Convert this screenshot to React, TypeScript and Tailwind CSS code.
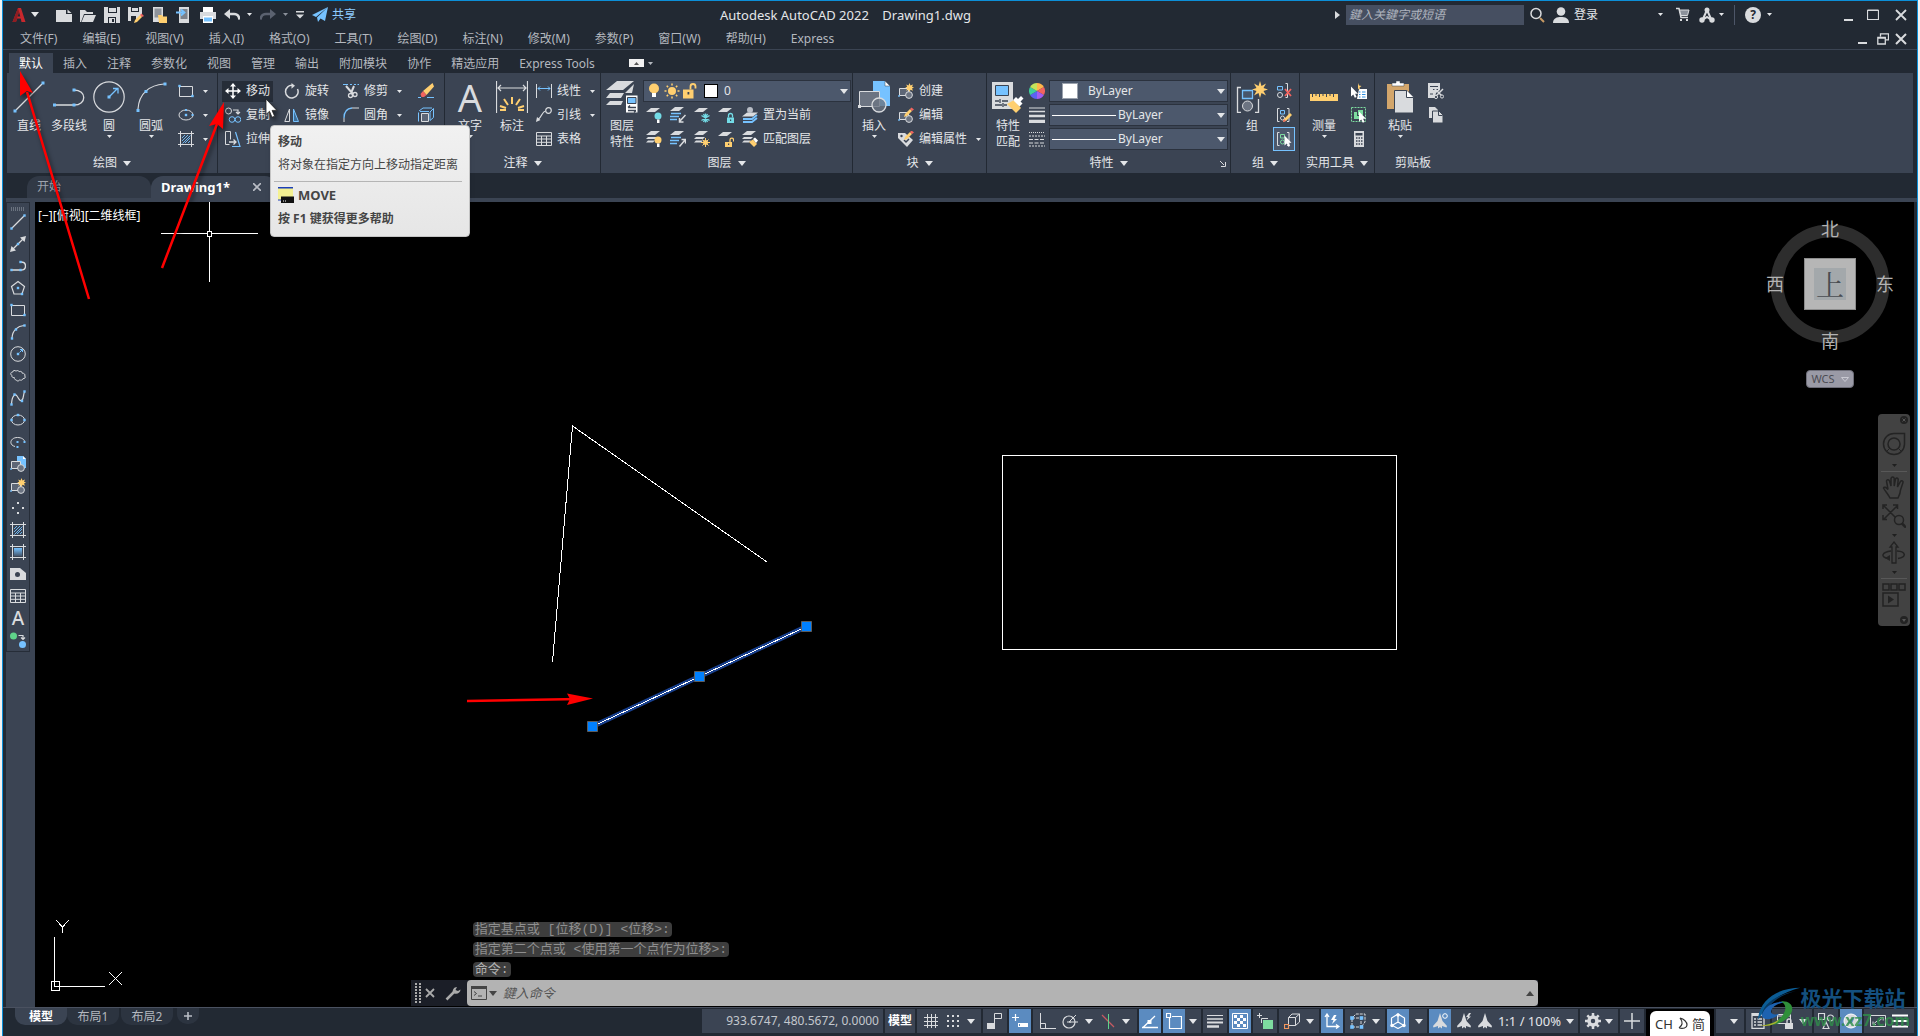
import React from "react";
import type { ReactNode } from "react";

const L = "#d9dbde";
const B = "#76c2ff";
const Y = "#ffcf70";
const T = "#73dbe6";
const G = "#7ddb9f";
const R = "#f2645f";
const D = "#3b4453";

type IcoProps = { s?: number; h?: number; vb?: string; children: ReactNode };

function Ico({ s = 16, h, vb, children }: IcoProps) {
  return (
    <svg width={s} height={h ?? s} viewBox={vb ?? `0 0 ${s} ${h ?? s}`} fill="none" className="shrink-0" aria-hidden="true">
      {children}
    </svg>
  );
}

const Dot = ({ x, y, r = 1.2 }: { x: number; y: number; r?: number }) => (
  <rect x={x - r} y={y - r} width={r * 2} height={r * 2} fill={B} />
);

function Caret({ big = false, up = false }: { big?: boolean; up?: boolean }) {
  return (
    <svg width={big ? 8 : 5} height={big ? 5 : 3} viewBox="0 0 8 5" preserveAspectRatio="none" className="shrink-0" aria-hidden="true">
      <path d={up ? "M0 5L4 0L8 5z" : "M0 0H8L4 5z"} fill="currentColor" />
    </svg>
  );
}

/* ---------- small icons ---------- */
const LineI = () => (<Ico><path d="M2 14L14 2" stroke={L} strokeWidth="1.3" /><Dot x={1.5} y={14.5} /><Dot x={14.5} y={1.5} /></Ico>);
const XLineI = () => (<Ico><path d="M2 14L14 2" stroke={L} strokeWidth="1.2" /><path d="M0 16l1.500-6 4.500 4.500zM16 0l-6 1.500 4.500 4.500z" fill={L} /><Dot x={8} y={8} /></Ico>);
const PlineI = () => (<Ico><path d="M1 12h9M11 4c6 0 6 8 0 8" stroke={L} strokeWidth="1.300" /><Dot x={1.5} y={12} /><Dot x={10.5} y={4} /><Dot x={10.5} y={12} /></Ico>);
const PolygonI = () => (<Ico><path d="M8 1.500L14.500 6.500 12 14H4L1.500 6.500z" stroke={L} strokeWidth="1.200" /><Dot x={8} y={8} /><Dot x={12} y={14} /></Ico>);
const RectI = () => (<Ico><path d="M1.500 3.500h13v10h-13z" stroke={L} /><Dot x={1.5} y={3} /><Dot x={14.5} y={13} /></Ico>);
const ArcI = () => (<Ico><path d="M2 14C2.500 6 8 2 14 1.500" stroke={L} strokeWidth="1.200" /><Dot x={2} y={14.5} /><Dot x={6} y={5.5} /><Dot x={14.5} y={1.5} /></Ico>);
const CircleI = () => (<Ico><circle cx="8" cy="8" r="7.300" stroke={L} /><path d="M9.500 6.500L12 4M10 3.500h2.500V6" stroke={B} /><Dot x={8} y={8} /></Ico>);
const CloudI = () => (<Ico><path d="M2 7.500C0 6.500.5 4 2.500 4.200 3 2.200 5 2 6 3.200c1-1 2.700-.8 3.200.5 1.500-.8 3 0 2.900 1.400 2 0 3.400 1.300 2.700 2.900 1.200 1.400-.2 3-1.800 2.600-.5 1.700-2.200 2-3.200 1.200-1 1.700-3.200 1.500-3.600 0-1.400 0-2.200-1-1.800-2.200C2.500 9.700 1.400 8.800 2 7.500z" stroke={L} /></Ico>);
const SplineI = () => (<Ico><path d="M1.500 14C2 6 5 3 7 6s3 6 5 4 1-5 2.500-8" stroke={L} strokeWidth="1.200" /><Dot x={1.5} y={14.5} /><Dot x={4.5} y={4.5} /><Dot x={12} y={11} /><Dot x={14.5} y={1.5} /></Ico>);
const EllipseI = () => (<Ico><ellipse cx="8" cy="8" rx="6.500" ry="5" stroke={L} /><Dot x={1.5} y={8} /><Dot x={14.5} y={8} /><Dot x={8} y={3} /></Ico>);
const EllipseCI = () => (<Ico><ellipse cx="8" cy="8" rx="7" ry="5" stroke={L} /><Dot x={8} y={8} /><Dot x={8} y={3} r={1} /><Dot x={14.5} y={8} r={1} /></Ico>);
const EArcI = () => (<Ico><path d="M5 12.500C-1.500 11 0 3.500 7.500 3.500c4 0 7 2 7 4" stroke={L} /><Dot x={7.5} y={8} r={1} /><Dot x={14.5} y={8} r={1} /><Dot x={7.5} y={13} r={1} /></Ico>);
const BlockBase = ({ light = "#5d6676" }: { light?: string }) => (
  <><path d="M1.500 5.500h9v7h-9z" stroke={L} fill={light} /><circle cx="11" cy="12" r="3.400" stroke={L} fill="#6b7381" /><Dot x={1} y={13} r={0.8} /></>
);
const InsertS = () => (<Ico><path d="M7 0h6l3 3v9H7z" fill={B} /><path d="M13 0v3h3z" fill="#fff" /><BlockBase /></Ico>);
const CreateI = () => (<Ico><BlockBase /><path d="M11.500 0l1 2.500L15 1.500l-1 2.300 2 .8-2 .9 1 2.300-2.500-1-1 2.200-1-2.200-2.300 1 1-2.300-2-.9 2-.8-1-2.300 2.300 1z" fill={Y} /></Ico>);
const Pencil = ({ dx = 0, dy = 0 }: { dx?: number; dy?: number }) => (
  <g transform={`translate(${dx} ${dy})`}><path d="M6 10l1-3 5-5 2 2-5 5z" fill={Y} /><path d="M12 2l1.500-1.500L16 2.500 14 4z" fill={R} /></g>
);
const EditBI = () => (<Ico><BlockBase /><Pencil /></Ico>);
const AttrI = () => (<Ico><path d="M0 2h7l8 7-6 7L0 7z" fill={L} /><circle cx="3.500" cy="5" r="1.200" fill={D} /><path d="M6 9l2 2 3-3" stroke={D} strokeWidth="1.500" /><Pencil dy={-1} /></Ico>);
const PointI = () => (<Ico><path d="M7 2h2v2H7zM2 7h2v2H2zM12 7h2v2h-2zM7 12h2v2H7z" fill={L} /></Ico>);
const HatchI = () => (<Ico><path d="M0 2.500h16M0 13.500h16M2.500 0v16M13.500 0v16" stroke={L} /><path d="M4 7l3-3M4 10l6-6M4.500 12.500l8-8M7 12l5-5M10 12l2-2" stroke={B} strokeWidth=".9" /></Ico>);
const GradI = () => (<Ico><defs><linearGradient id="grd" x1="0" y1="0" x2="0" y2="1"><stop offset="0" stopColor={B} /><stop offset="1" stopColor="#46566c" /></linearGradient></defs><path d="M4 4h8v8H4z" fill="url(#grd)" /><path d="M0 2.500h16M0 13.500h16M2.500 0v16M13.500 0v16" stroke={L} /></Ico>);
const RegionI = () => (<Ico><path d="M0 2h10l6 5v7H0z" fill={L} /><circle cx="7.500" cy="8.500" r="2.500" fill={D} /></Ico>);
const TableI = () => (<Ico><path d="M.5 1.500h15v13H.5zM.5 5h15M.5 8h15M.5 11.300h15M5.500 5v9.500M10.500 5v9.500" stroke={L} /></Ico>);
const TextI = () => <span className="text-[19px] leading-[22px] font-medium text-[#d9dbde]">A</span>;
const AddSelI = () => (<Ico><circle cx="3.500" cy="4" r="3.500" fill="#5fd38a" /><circle cx="12.500" cy="12.500" r="3.500" fill={B} /><path d="M8.500 3.500h4.500v3M11 5.500l2 2 2-2" stroke={L} strokeWidth="1.200" /></Ico>);

const MoveI = () => (<Ico><path d="M8 1v14M1 8h14" stroke="#fff" strokeWidth="1.500" /><path d="M8 0l3 3.500H5zM8 16l3-3.500H5zM0 8l3.500-3v6zM16 8l-3.500-3v6z" fill="#fff" /></Ico>);
const CopyI = () => (<Ico><circle cx="3.500" cy="4" r="3" stroke={L} /><path d="M8 3h5v3M11 5l2 2 2-2" stroke={L} strokeWidth="1.200" /><circle cx="7" cy="12.500" r="2.800" stroke={B} /><circle cx="13" cy="12.500" r="2.800" stroke={B} /></Ico>);
const StretchI = () => (<Ico><path d="M4.500 13.500H.5V.5h5v8" stroke={L} /><path d="M10.500 1L15 15.500H7" stroke={B} strokeWidth="1.200" /><path d="M4 11h7M8.500 8.500L11 11l-2.500 2.500" stroke={L} strokeWidth="1.300" /></Ico>);
const RotateI = () => (<Ico><path d="M9 2.500A6.300 6.300 0 1 0 13.500 6" stroke={L} strokeWidth="1.500" /><path d="M7.500 0l3.500 2.700-3.500 3z" fill={L} /></Ico>);
const MirrorI = () => (<Ico><path d="M5.500 2v12.500H.8z" stroke={L} /><path d="M9.500 2v12.500h5z" stroke={B} fill="#3f6f99" /></Ico>);
const TrimI = () => (<Ico><path d="M0 1.500h5M7 1.500h2M11 1.500h2M14.500 1.500h1.500" stroke={B} /><path d="M3 3l7 8M11 3L8.500 9" stroke={L} strokeWidth="2" /><circle cx="7.500" cy="12.500" r="2" stroke={L} strokeWidth="1.300" /><circle cx="12" cy="11.500" r="2" stroke={L} strokeWidth="1.300" /></Ico>);
const FilletI = () => (<Ico><path d="M1 15V11M9 1h7" stroke={L} /><path d="M1 11C1 5 4 1.500 9 1" stroke={B} strokeWidth="1.300" /></Ico>);
const EraseI = () => (<Ico><path d="M14.500 0L16 3.500 8.500 12 5 8z" fill={Y} /><path d="M5 8l3.500 4L6 14H3.500L2.500 11z" fill={R} /><path d="M0 14.500h3M9 14.500h7" stroke={B} /></Ico>);
const ExplodeI = () => (<Ico><path d="M3.500 6.500h7v8h-7z" stroke={L} fill="#5d6676" /><path d="M.5 5.500v9M1 4l4-3h9M2 4.500h9M12 5l3.500-3.500v9L12 13.500z" stroke={B} /></Ico>);

const LinDimI = () => (<Ico><path d="M.5 1v14M15.500 1v14" stroke={L} /><path d="M2 5.500h12M4 3.500l-2 2 2 2M12 3.500l2 2-2 2" stroke={B} /></Ico>);
const LeaderI = () => (<Ico><circle cx="12.500" cy="3.500" r="2.800" stroke={L} strokeWidth="1.200" /><path d="M9.500 4C6 4.500 6 10 2 12.500" stroke={L} strokeWidth="1.200" /><path d="M0 15l1-5 3.500 3z" fill={L} /></Ico>);

const Para = ({ y = 0, c = L }: { y?: number; c?: string }) => <path d={`M5 ${y}h9l-5 4H0z`} fill={c} />;
const Stack = () => (<><Para y={0} /><path d="M2 6h9l-2 2H0zM2 9.500h7l-2 2H0z" fill={L} /></>);
const Bulb = ({ c }: { c: string }) => (<><circle cx="12" cy="9" r="3.500" fill={c} /><path d="M11 12.500h2.500V16H11z" fill="#fff" /></>);
const LyOffI = () => (<Ico><Para y={1} /><Bulb c={T} /></Ico>);
const LyIsoI = () => (<Ico><Para y={0} /><path d="M1 6.500h10M0 9.500h9M0 12.500h7" stroke={B} strokeWidth="1.700" /><path d="M15.500 8L10 14M9.500 11v4h4" stroke={L} strokeWidth="1.500" /></Ico>);
const LyFrzI = () => (<Ico><Para y={1} /><path d="M11.500 6.500v9M7.500 8.500l8 5M15.500 8.500l-8 5M9.500 7l4 8M13.500 7l-4 8" stroke={T} strokeWidth="1.300" /></Ico>);
const LyLckI = () => (<Ico><Para y={1} /><path d="M9 10.500h7V16H9z" fill={T} /><path d="M10.500 10.500V8.500a2 2 0 0 1 4 0v2" stroke={T} strokeWidth="1.300" /><path d="M12 12.500h1.200v1.500H12z" fill={D} /></Ico>);
const LyCurI = () => (<Ico><path d="M5 5.500h11l-5 4H0z" fill={L} /><circle cx="8" cy="3" r="3" fill="#b9bec7" /><path d="M1 12h9l5-4M1 15h9l5-4" stroke={B} strokeWidth="1.800" /></Ico>);
const LyOnI = () => (<Ico><Stack /><Bulb c={Y} /></Ico>);
const LyUnisoI = () => (<Ico><Para y={0} /><path d="M1 6.500h10M0 9.500h9M0 12.500h7" stroke={B} strokeWidth="1.700" /><path d="M9.500 15.500L15 9M11.500 8.500h4v4" stroke={L} strokeWidth="1.500" /></Ico>);
const LyThwI = () => (<Ico><Stack /><circle cx="11.500" cy="11.500" r="2.500" fill={Y} /><path d="M11.500 7v9M7 11.500h9M8.500 8.500l6 6M14.500 8.500l-6 6" stroke={Y} /></Ico>);
const LyUlkI = () => (<Ico><Para y={1} /><path d="M7 11h7v5H7z" fill={Y} /><path d="M12 11V9a1.800 1.800 0 0 1 3.600 0v1.500" stroke={Y} strokeWidth="1.300" /><path d="M10 12.500h1.200v1.500H10z" fill={D} /></Ico>);
const LyMchI = () => (<Ico><Stack /><path d="M7 11l4-2.500 4 4.500-3 3z" fill={Y} /><path d="M11 8l2-1.500 3 3L14 12z" fill="#fff" /></Ico>);

const BulbI = () => (<Ico><circle cx="8" cy="5.500" r="5" fill={Y} /><path d="M6 10h4v4H6z" fill="#fff" /></Ico>);
const SunI = () => (<Ico><circle cx="8" cy="8" r="4" fill={Y} /><path d="M8 .5v2M8 13.500v2M.5 8h2M13.500 8h2M2.700 2.700l1.400 1.400M11.900 11.900l1.400 1.400M13.300 2.700l-1.400 1.400M4.100 11.900l-1.400 1.400" stroke={Y} strokeWidth="1.500" /></Ico>);
const UnlockI = () => (<Ico><path d="M1 6.500h10.500v9H1z" fill={Y} /><path d="M8.500 6.500V3.500a2.500 2.500 0 0 1 5 0v2" stroke={Y} strokeWidth="1.800" /><path d="M5.500 9h1.800v2.500H5.500z" fill={D} /></Ico>);

const WheelI = () => (
  <Ico><path d="M8 8V0a8 8 0 0 1 6.900 4z" fill="#ffb54a" /><path d="M8 8l6.900-4a8 8 0 0 1 0 8z" fill="#f2645f" /><path d="M8 8l6.900 4A8 8 0 0 1 8 16z" fill="#a45cf0" /><path d="M8 8v8a8 8 0 0 1-6.900-4z" fill="#5b62f2" /><path d="M8 8l-6.900 4a8 8 0 0 1 0-8z" fill="#3fcf9a" /><path d="M8 8L1.100 4A8 8 0 0 1 8 0z" fill="#c4e35a" /></Ico>
);
const LwtI = () => (<Ico><path d="M0 1h16" stroke={L} /><path d="M0 4.500h16" stroke={L} strokeWidth="1.500" /><path d="M0 9h16" stroke={L} strokeWidth="2.500" /><path d="M0 14.500h16" stroke={L} strokeWidth="3.500" /></Ico>);
const LtypeI = () => (<Ico><path d="M0 1.500h16" stroke={L} strokeDasharray="1 1" /><path d="M0 5h16" stroke={L} strokeDasharray="2 1" /><path d="M0 8.500h16M0 12h16" stroke={L} strokeDasharray="4 1.500" /><path d="M0 15h16" stroke={L} strokeDasharray="2 1" /></Ico>);

const Bracket = () => <path d="M3.500 1.500h-2v13h2M11 1.500h2v13h-2" stroke={L} />;
const UngroupI = () => (<Ico><path d="M9.500.5h2v14h-2" stroke={L} /><path d="M1.500 3.500h5v3.500h-5z" stroke={B} /><circle cx="4" cy="12" r="2.500" stroke={L} /><path d="M9 6l6 7M15 6l-6 7" stroke={R} strokeWidth="1.800" /></Ico>);
const GrpEditI = () => (<Ico><Bracket /><path d="M4.500 3.500h4V7h-4z" stroke={B} /><circle cx="6.500" cy="11" r="2" stroke={L} /><path d="M7 15l1-3 6-6 2 2-6 6z" fill={Y} /><path d="M7 15l1-3 2 2z" fill={R} /></Ico>);
const Cursor = ({ x, y }: { x: number; y: number }) => <path transform={`translate(${x} ${y})`} d="M0 0v10l2.300-2 1.500 3.200 1.800-.8-1.500-3.200H7z" fill="#fff" />;
const GrpSelI = () => (<Ico><Bracket /><path d="M4.500 3.500h4V7h-4z" stroke={G} /><circle cx="6.500" cy="11" r="2" stroke={G} /><Cursor x={8.5} y={4.5} /></Ico>);
const QSelI = () => (<Ico><path d="M8 6h8v10H6z" fill="#fff" /><path d="M8 9h1.500M11 9h3.500M8 11.500h1.500M11 11.500h3.500M8 14h1.500M11 14h3.500" stroke="#2d8fe0" /><path d="M7 0l1 2.500 2.500.5-2 1.500.5 2.500-2-1.500z" fill={Y} /><Cursor x={0} y={3.5} /></Ico>);
const SelAllI = () => (<Ico><path d="M.5.5h14v14H.5z" stroke={G} strokeDasharray="2 1" /><path d="M3 5h3v4h4v3H3z" fill={G} /><path d="M7 3h5v5H7z" fill={G} /><Cursor x={8} y={4.5} /></Ico>);
const CalcI = () => (<Ico><path d="M3 0h10v16H3z" fill={L} /><path d="M4.500 2h7v2.500h-7z" fill={D} /><path d="M5 7h1.500M7.500 7H9M10 7h1.500M5 10h1.500M7.500 10H9M10 10h1.500M5 13h1.500M7.500 13H9M10 13h1.500" stroke={D} strokeWidth="1.600" /></Ico>);
const CutI = () => (<Ico><path d="M0 0h12v7l-4 3-1 5H0z" fill={L} /><path d="M2 3.500h8M5 6.500h5M2 11h3" stroke={D} /><path d="M6 5l8 8M15 6l-7 7" stroke={L} strokeWidth="1.500" /><circle cx="8" cy="14" r="1.600" stroke={L} fill={D} /><circle cx="14" cy="13.500" r="1.600" stroke={L} fill={D} /></Ico>);
const ClipI = () => (<Ico><path d="M1 0h6l3 3v8H1z" fill={L} /><path d="M5 4h6l4 4v8H4.500V4z" fill={L} stroke={D} /><path d="M10.500 4v4.500h4" stroke={D} /></Ico>);

/* ---------- quick access icons ---------- */
const NewI = () => (<Ico><path d="M0 3h10v4h6v8H0z" fill={L} /><path d="M11.500 2.500L15.500 6h-4z" fill={L} /></Ico>);
const OpenI = () => (<Ico><path d="M0 3h5l2 2h6v2H4L1 15H0z" fill={L} /><path d="M4.500 8H16l-3 7H1.500z" fill={L} /></Ico>);
const SaveI = () => (<Ico><path d="M0 0h16v16H0z" fill={L} /><path d="M4 0h9v6H4zM4 10h8v6H4z" fill="#222933" /><path d="M5 1h7v4H5zM5 11h6v5H5z" fill={L} /><path d="M8 12h2v3H8z" fill="#222933" /></Ico>);
const SaveAsI = () => (<Ico><path d="M0 0h14v9l-5 5H0z" fill={L} /><path d="M3 0h8v5H3zM3 9h5v5H3z" fill="#222933" /><path d="M4 1h6v3H4z" fill={L} /><g transform="translate(0 5)"><path d="M6 11l1-3 5-5 2 2-5 5z" fill={Y} /><path d="M12 3l1.500-1.500L16 4l-2 1z" fill={R} /></g></Ico>);
const WebOpenI = () => (<Ico><path d="M1 0h10v15H1z" fill={L} /><path d="M2.500 1.500h7v9h-7z" fill="#8e939b" /><path d="M6 8h4l1 1.500h4V16H7z" fill={Y} /></Ico>);
const WebSaveI = () => (<Ico><path d="M3 0h10v16H3z" fill={L} /><path d="M4.500 2h7v10h-7z" fill="#7d838c" /><path d="M0 5.500h7M5 2.500l3.500 3L5 8.500" stroke={B} strokeWidth="1.800" /></Ico>);
const PrintI = () => (<Ico><path d="M3 0h10v5H3z" fill="#fff" /><path d="M0 5h16v7H0z" fill={L} /><path d="M3 9h10v7H3z" fill="#fff" /><path d="M4 10.500h8v4H4z" fill={B} /></Ico>);
const UndoI = () => (<Ico><path d="M0 7l6-5v10z" fill={L} /><path d="M5 7h5c3 0 5 2 5.500 5.500" stroke={L} strokeWidth="2.500" /></Ico>);
const RedoI = () => (<Ico><path d="M16 7l-6-5v10z" fill="#5b6270" /><path d="M11 7H6c-3 0-5 2-5.500 5.500" stroke="#5b6270" strokeWidth="2.500" /></Ico>);
const ShareI = () => (<Ico><path d="M16 0L0 8l4 2zM16 0L5 10.500l1 4.500 2.500-3.500L13 14z" fill={B} /></Ico>);

/* ---------- large icons ---------- */
const LineB = () => (<Ico s={32}><path d="M3 29L29 3" stroke={L} strokeWidth="1.300" /><Dot x={2} y={30} r={1.5} /><Dot x={30} y={2} r={1.5} /></Ico>);
const PlineB = () => (<Ico s={32}><path d="M1 24h20M21 9c13 0 13 15 0 15" stroke={L} strokeWidth="1.300" /><Dot x={1.5} y={24} r={1.5} /><Dot x={21} y={9} r={1.5} /><Dot x={21} y={24} r={1.5} /></Ico>);
const CircleB = () => (<Ico s={32}><circle cx="16" cy="16" r="15.200" stroke={L} strokeWidth="1.200" /><path d="M16 16l8-8M20 7.500h5v5" stroke={B} strokeWidth="1.300" /><Dot x={16} y={16} r={1.5} /></Ico>);
const ArcB = () => (<Ico s={32}><path d="M3 28C4 12 15 4 29 3" stroke={L} strokeWidth="1.200" /><Dot x={3} y={29.5} r={1.5} /><Dot x={11} y={10.5} r={1.5} /><Dot x={30} y={3} r={1.5} /></Ico>);
const TextB = () => <span className="flex h-8 items-center text-[38px] leading-8 text-[#d9dbde]">A</span>;
const DimB = () => (<Ico s={32}><path d="M.5 0v32M31.500 0v32M2 7h28M5 4L2 7l3 3M27 4l3 3-3 3" stroke={L} strokeWidth="1.200" /><path d="M16 16v7M8 18l4 6M24 18l-4 6M4 25l6 2M28 25l-6 2M4 29h6M28 29h-6" stroke={Y} strokeWidth="2" /></Ico>);
const LayerB = () => (<Ico s={32}><path d="M11 0h17l-11 9H0zM4 12h14l-3 5H0zM4 20h13l-2 4H0zM28 3l-9 9h7z" fill={L} /><path d="M19.500 14H32v18H19.500z" fill="#fff" stroke={D} /><path d="M21.500 16.500h8.500v6h-8.500z" fill={B} stroke={D} /><path d="M22 26.500h8M22 29.500h8M24 24.500l-2 2M28 31.500l2-2" stroke={D} strokeWidth="1.300" /></Ico>);
const InsertB = () => (<Ico s={32}><path d="M15 0h12l5 5v20H15z" fill={B} /><path d="M27 0v5h5z" fill="#fff" stroke={D} strokeWidth=".5" /><path d="M1.500 10.500h20v15h-20z" fill="#6c7482" stroke={L} /><circle cx="21" cy="24" r="7" fill="#6c7482" fillOpacity=".8" stroke={L} strokeWidth="1.300" /><path d="M0 24h3v3H0z" fill={L} /></Ico>);
const MatchB = () => (<Ico s={32}><path d="M0 1h21v27H0z" fill={L} /><path d="M3.500 4.500h13v10h-13z" fill={B} stroke={D} /><path d="M3 20h4M10 20h6M3 24h7M12 24h3M8 18v4M11 22v4" stroke={D} strokeWidth="1.300" /><path d="M15 23l7-4 7 8-5 5z" fill={Y} /><path d="M21 19l3-3 2 2 3-3 2.500 2.500-3 3 2 2-3 3z" fill="#fff" /></Ico>);
const GroupB = () => (<Ico s={32}><path d="M5 6.500H1.500v25H5M19 31.500h3.500V18" stroke={L} strokeWidth="1.300" /><path d="M6.500 9.500h10v8h-10z" stroke={B} strokeWidth="1.300" fill="#47566c" /><circle cx="11.500" cy="25" r="5" fill="#6c7482" stroke={L} /><path d="M24 0l1.500 5L30 2.500 27.500 7l4.500 1.500-4.500 1.500 2.500 4.500-4.500-2.500-1.500 5-1.500-5L18 14.500l2.500-4.500L16 8.500 20.500 7 18 2.500 22.500 5z" fill={Y} /></Ico>);
const RulerB = () => (<Ico s={30} h={32}><path d="M1 13h28v7H1z" fill={Y} /><path d="M3.500 13v3M7 13v2M10.500 13v3M14 13v2M17.500 13v3M21 13v2M24.500 13v3" stroke={D} /></Ico>);
const PasteB = () => (<Ico s={32}><path d="M3 3h22v25H3z" fill="#d3a66b" /><path d="M8 2h4V0h4v2h4v3H8z" fill="#fff" stroke={D} strokeWidth=".5" /><path d="M10.500 9.500H23l6.500 6.500v16h-19z" fill={L} stroke={D} /><path d="M22.500 9.500v7h7" stroke={D} fill="#fff" /></Ico>);

/* ---------- ribbon building blocks ---------- */
type BigProps = { icon: ReactNode; label: string; second?: string; arrow?: boolean; w?: string };
function Big({ icon, label, second, arrow, w = "w-10" }: BigProps) {
  return (
    <button className={`flex flex-col items-center pt-2 ${w}`}>
      {icon}
      <span className="mt-[5px] leading-4">{label}</span>
      {second && <span className="leading-4">{second}</span>}
      {arrow && <span className="mt-px"><Caret /></span>}
    </button>
  );
}

type SmallProps = { icon: ReactNode; label?: string; arrow?: boolean; hot?: boolean };
function Small({ icon, label, arrow, hot }: SmallProps) {
  return (
    <div className="flex h-6 items-center">
      <button className={`flex h-[21px] items-center gap-[5px] px-[3px] ${hot ? "bg-[#262d38]" : ""}`} aria-label={label ?? "工具"}>
        {icon}
        {label && <span>{label}</span>}
      </button>
      {arrow && <button className="flex w-4 justify-center" aria-label="更多"><Caret /></button>}
    </div>
  );
}

function Panel({ w, title, caret = true, corner, children }: { w: string; title: string; caret?: boolean; corner?: boolean; children: ReactNode }) {
  return (
    <section className={`relative flex shrink-0 flex-col border-r border-[#222933] ${w}`}>
      <div className="flex h-20">{children}</div>
      <button className="flex h-5 items-center justify-center gap-1.5">
        <span>{title}</span>
        {caret && <Caret big />}
      </button>
      {corner && (
        <span className="absolute right-1 bottom-1.5"><Ico s={6}><path d="M0 0l4 4M5.500 1v4.500H1" stroke={L} /></Ico></span>
      )}
    </section>
  );
}

const Col = ({ children }: { children: ReactNode }) => <div className="flex flex-col pt-1.5">{children}</div>;

function PropSelect({ label, swatch }: { label: string; swatch?: boolean }) {
  return (
    <div className="flex h-6 items-center">
      <div className="flex h-[22px] w-[179px] items-center border border-[#2b323e] bg-[#4c586c] pr-0.5">
        {swatch ? <span className="ml-3 mr-2.5 size-4 border border-[#9aa1ac] bg-white" /> : <span className="ml-0.5 mr-0.5 h-px w-16 bg-white" />}
        <select aria-label={label} className="min-w-0 grow appearance-none bg-transparent outline-none"><option>ByLayer</option></select>
        <Caret big />
      </div>
    </div>
  );
}

const menus = ["文件(F)", "编辑(E)", "视图(V)", "插入(I)", "格式(O)", "工具(T)", "绘图(D)", "标注(N)", "修改(M)", "参数(P)", "窗口(W)", "帮助(H)", "Express"];
const tabs = ["默认", "插入", "注释", "参数化", "视图", "管理", "输出", "附加模块", "协作", "精选应用", "Express Tools"];
const sideTools: [string, () => ReactNode][] = [
  ["直线", LineI], ["构造线", XLineI], ["多段线", PlineI], ["多边形", PolygonI], ["矩形", RectI], ["圆弧", ArcI], ["圆", CircleI],
  ["修订云线", CloudI], ["样条曲线", SplineI], ["椭圆", EllipseI], ["椭圆弧", EArcI], ["插入块", InsertS], ["创建块", CreateI],
  ["点", PointI], ["图案填充", HatchI], ["渐变色", GradI], ["面域", RegionI], ["表格", TableI], ["多行文字", TextI], ["添加选定对象", AddSelI],
];

function TitleBar() {
  return (
    <header className="flex h-[27px] shrink-0 items-center text-[#e4e6e9]">
      <div className="flex items-center pl-2">
        <Ico s={16}><path d="M1.500 15L7 1h3l4.500 14h-4l-.8-3.500H6.200L5 15z" fill="#c8282d" /><path d="M8 5l1.300 4.500H6.500z" fill="#222933" /><path d="M1.500 15L7 1l1 4-3 10z" fill="#8f1d22" /></Ico>
        <span className="ml-1"><Caret big /></span>
        <div className="ml-[17px] flex items-center gap-2">
          <button aria-label="新建"><NewI /></button><button aria-label="打开"><OpenI /></button><button aria-label="保存"><SaveI /></button>
          <button aria-label="另存为"><SaveAsI /></button><button aria-label="从Web打开"><WebOpenI /></button><button aria-label="保存到Web"><WebSaveI /></button>
          <button aria-label="打印"><PrintI /></button><button aria-label="放弃"><UndoI /></button>
        </div>
        <span className="ml-[7px]"><Caret /></span>
        <button className="ml-2" aria-label="重做"><RedoI /></button>
        <span className="ml-[7px] text-[#8b919b]"><Caret /></span>
        <span className="ml-2"><Ico s={8}><path d="M0 0h8v1.500H0zM0 3.500h8L4 7.500z" fill={L} /></Ico></span>
        <button className="ml-2 flex items-center gap-1 text-[#8fccff]"><ShareI />共享</button>
      </div>
      <h1 className="grow text-center text-[13px] whitespace-pre">Autodesk AutoCAD 2022    Drawing1.dwg</h1>
      <div className="flex items-center pr-2.5">
        <Ico s={5} h={8}><path d="M0 0l5 4-5 4z" fill={L} /></Ico>
        <input aria-label="搜索" placeholder="鍵入关鍵字或短语" className="ml-1.5 h-5 w-[178px] bg-[#464f61] px-[3px] italic outline-none placeholder:text-[#b0b5bf]" />
        <button className="ml-1.5" aria-label="搜索"><Ico><circle cx="6" cy="6.500" r="5" stroke={L} strokeWidth="1.500" /><path d="M10 11l4 4" stroke="#c89a63" strokeWidth="2" /></Ico></button>
        <button className="ml-[7px] flex items-center gap-[5px]"><Ico><circle cx="8" cy="4.500" r="4.300" fill={L} /><path d="M0 16c0-5 4-6 8-6s8 1 8 6z" fill={L} /></Ico>登录</button>
        <span className="ml-[60px]"><Caret /></span>
        <button className="ml-3" aria-label="应用商店"><Ico><path d="M1 1.500h3l2 9h7" stroke={L} strokeWidth="1.500" /><path d="M4.500 3H14l-1.500 5.500H6z" fill="#8b919b" stroke={L} /><path d="M5 12h2v2H5zM11 12h2v2h-2z" fill={L} /></Ico></button>
        <button className="ml-2" aria-label="Autodesk"><Ico><path d="M8 3L3.500 13M8 3l4.500 10M3.500 13l4.500-3 4.500 3" stroke={L} strokeWidth="2" /><circle cx="8" cy="3" r="2.500" fill={L} /><circle cx="3" cy="13" r="2.700" fill={L} /><circle cx="13" cy="13" r="2.700" fill={L} /></Ico></button>
        <span className="ml-1"><Caret /></span>
        <span className="mx-2.5 h-5 w-px bg-[#4d5668]" />
        <button aria-label="帮助" className="size-4 rounded-full bg-[#d9dbde] text-[12px] leading-4 font-bold text-[#222933]">?</button>
        <span className="ml-1.5"><Caret /></span>
        <button className="ml-[72px]" aria-label="最小化"><Ico s={9} h={12}><path d="M0 11h9" stroke={L} strokeWidth="2" /></Ico></button>
        <button className="ml-3.5" aria-label="最大化"><Ico s={12}><path d="M.5 1.500h11v9H.5zM.5 1h11" stroke={L} strokeWidth="1.200" /></Ico></button>
        <button className="ml-4" aria-label="关闭"><Ico s={12}><path d="M1 1l10 10M11 1L1 11" stroke={L} strokeWidth="1.800" /></Ico></button>
      </div>
    </header>
  );
}

function MenuBar() {
  return (
    <nav className="flex h-[22px] shrink-0 items-center border-b border-[#3b4453] pr-2.5 text-[#b4b8bf]">
      <div className="flex gap-[25px] pl-[17px]">{menus.map((m) => <button key={m}>{m}</button>)}</div>
      <div className="ml-auto flex items-center gap-1.5">
        <button aria-label="最小化图形"><Ico s={9} h={11}><path d="M0 10h9" stroke={L} strokeWidth="2" /></Ico></button>
        <button className="ml-1" aria-label="还原图形"><Ico s={12}><path d="M3.500 3.500V.8h8v6H9M.8 4.500h7.500v6.500H.8zM.8 5h7.500" stroke={L} strokeWidth="1.300" /></Ico></button>
        <button aria-label="关闭图形"><Ico s={12}><path d="M1 1l10 10M11 1L1 11" stroke={L} strokeWidth="2" /></Ico></button>
      </div>
    </nav>
  );
}

function Ribbon() {
  return (
    <div className="shrink-0 pr-1 pl-1 text-[#e4e6e9]">
      <div className="flex h-[23px] items-end pl-[2px] text-[#b4b8bf]" role="tablist">
        {tabs.map((t, i) => (
          <button key={t} role="tab" aria-selected={i === 0} className={`h-5 px-2.5 pt-0.5 ${i === 0 ? "bg-[#3b4453] text-white" : ""}`}>{t}</button>
        ))}
        <button className="mb-1.5 ml-6 flex items-center gap-1 self-end" aria-label="最小化功能区">
          <span className="flex h-2 w-[15px] items-center justify-center bg-[#f1f1f1] text-[#555]"><Caret up /></span><Caret />
        </button>
      </div>
      <div className="flex h-[100px] bg-[#3b4453]">
        <Panel w="w-[211px]" title="绘图">
          <div className="flex pl-0.5">
            <Big icon={<LineB />} label="直线" /><Big icon={<PlineB />} label="多段线" /><Big icon={<CircleB />} label="圆" arrow /><Big icon={<ArcB />} label="圆弧" arrow w="w-11" />
          </div>
          <div className="pl-0.5"><Col><Small icon={<RectI />} arrow /><Small icon={<EllipseCI />} arrow /><Small icon={<HatchI />} arrow /></Col></div>
        </Panel>
        <Panel w="w-[227px]" title="修改">
          <div className="flex gap-2 pl-1">
            <Col><Small icon={<MoveI />} label="移动" hot /><Small icon={<CopyI />} label="复制" /><Small icon={<StretchI />} label="拉伸" /></Col>
            <Col><Small icon={<RotateI />} label="旋转" /><Small icon={<MirrorI />} label="镜像" /></Col>
            <Col><Small icon={<TrimI />} label="修剪" arrow /><Small icon={<FilletI />} label="圆角" arrow /></Col>
            <Col><Small icon={<EraseI />} /><Small icon={<ExplodeI />} /></Col>
          </div>
        </Panel>
        <Panel w="w-[156px]" title="注释">
          <div className="flex pl-1"><Big icon={<TextB />} label="文字" arrow w="w-[42px]" /><Big icon={<DimB />} label="标注" w="w-[42px]" /></div>
          <Col><Small icon={<LinDimI />} label="线性" arrow /><Small icon={<LeaderI />} label="引线" arrow /><Small icon={<TableI />} label="表格" /></Col>
        </Panel>
        <Panel w="w-[252px]" title="图层">
          <Big icon={<LayerB />} label="图层" second="特性" w="w-[42px]" />
          <Col>
            <div className="flex h-6 items-center">
              <div className="flex h-[22px] w-[208px] items-center gap-0.5 border border-[#2b323e] bg-[#4c586c] px-0.5">
                <BulbI /><SunI /><UnlockI /><span className="mx-1 size-3.5 border border-black bg-white" />
                <select aria-label="图层" className="min-w-0 grow appearance-none bg-transparent outline-none"><option>0</option></select>
                <Caret big />
              </div>
            </div>
            <div className="flex h-6 items-center gap-2 pl-[3px]">
              <LyOffI /><LyIsoI /><LyFrzI /><LyLckI /><button className="flex items-center gap-[5px]"><LyCurI />置为当前</button>
            </div>
            <div className="flex h-6 items-center gap-2 pl-[3px]">
              <LyOnI /><LyUnisoI /><LyThwI /><LyUlkI /><button className="flex items-center gap-[5px]"><LyMchI />匹配图层</button>
            </div>
          </Col>
        </Panel>
        <Panel w="w-[134px]" title="块">
          <Big icon={<InsertB />} label="插入" arrow w="w-[42px]" />
          <Col><Small icon={<CreateI />} label="创建" /><Small icon={<EditBI />} label="编辑" /><Small icon={<AttrI />} label="编辑属性" arrow /></Col>
        </Panel>
        <Panel w="w-[244px]" title="特性" corner>
          <Big icon={<MatchB />} label="特性" second="匹配" w="w-[42px]" />
          <Col><span className="flex h-6 w-5 items-center"><WheelI /></span><span className="flex h-6 items-center"><LwtI /></span><span className="flex h-6 items-center"><LtypeI /></span></Col>
          <Col><PropSelect label="对象颜色" swatch /><PropSelect label="线宽" /><PropSelect label="线型" /></Col>
        </Panel>
        <Panel w="w-[69px]" title="组">
          <Big icon={<GroupB />} label="组" w="w-[42px]" />
          <Col>
            <Small icon={<UngroupI />} /><Small icon={<GrpEditI />} />
            <button aria-label="组选择" aria-pressed="true" className="flex h-6 w-[22px] items-center justify-center border border-[#76c2ff] bg-[#4c586c]"><GrpSelI /></button>
          </Col>
        </Panel>
        <Panel w="w-[75px]" title="实用工具">
          <Big icon={<RulerB />} label="测量" arrow w="w-12" />
          <Col><Small icon={<QSelI />} /><Small icon={<SelAllI />} /><Small icon={<CalcI />} /></Col>
        </Panel>
        <section className="flex w-[76px] flex-col">
          <div className="flex h-20"><Big icon={<PasteB />} label="粘贴" arrow w="w-[50px]" /><Col><Small icon={<CutI />} /><Small icon={<ClipI />} /></Col></div>
          <span className="text-center leading-5">剪贴板</span>
        </section>
      </div>
    </div>
  );
}

function FileTabs() {
  return (
    <div className="shrink-0">
      <div className="flex h-[25px] items-end pl-6 text-[#9da3ad]">
        <button className="h-[22px] w-[124px] rounded-t-[12px] bg-[#313946] px-2.5 text-left">开始</button>
        <div className="flex h-[22px] w-[126px] items-center justify-between rounded-t-[12px] bg-[#3b4453] pr-4 pl-2.5 font-bold text-white">
          <button className="text-[13px]">Drawing1*</button>
          <button aria-label="关闭Drawing1"><Ico s={8}><path d="M0 0l8 8M8 0L0 8" stroke="#b9bdc5" strokeWidth="1.600" /></Ico></button>
        </div>
      </div>
      <div className="ml-[3px] h-1 bg-[#3b4453]" />
    </div>
  );
}

function SideToolbar() {
  return (
    <aside className="w-[29px] shrink-0 bg-[#3b4453]">
      <div className="flex w-6 flex-col items-center border border-[#262d38] pt-1">
        <Ico s={14} h={4}><path d="M0 1h14M0 3h14" stroke="#9aa1ac" strokeDasharray="1 1" /></Ico>
        {sideTools.map(([name, I]) => (
          <button key={name} aria-label={name} className="flex h-[22px] items-center"><I /></button>
        ))}
      </div>
    </aside>
  );
}

function ViewCube() {
  return (
    <div className="absolute top-[22px] right-5 flex w-32 flex-col items-center text-[18px] text-[#b3b3b3]">
      <svg className="absolute top-0 left-1" width="120" height="120" viewBox="0 0 120 120" aria-hidden="true"><circle cx="60" cy="60" r="53" stroke="#2d2d2d" strokeWidth="13" fill="none" /></svg>
      <span className="relative -mt-2 leading-[26px]">北</span>
      <div className="relative flex w-full items-center justify-between py-4">
        <span>西</span>
        <button className="flex size-[52px] items-center justify-center border border-[#8c8c8c] bg-[#b6b6b6]"><span className="bg-[#a3a8ab] px-0.5 font-['Noto_Serif_CJK_SC','Noto_Sans_CJK_SC',serif] text-[28px] leading-8 text-[#484c52]">上</span></button>
        <span>东</span>
      </div>
      <span className="relative mt-0.5 leading-[26px]">南</span>
      <button className="mt-4 flex h-[18px] w-12 items-center justify-center gap-1.5 rounded border border-[#6d6d78] bg-[#9a9aa6] text-[11px] text-[#4b4b52]">WCS<Ico s={8} h={5}><path d="M.5.5h7L4 4.500z" stroke="#c9c9d2" /></Ico></button>
    </div>
  );
}

function NavBar() {
  const S = "#232323";
  return (
    <div className="absolute top-[212px] right-1 flex h-[212px] w-8 flex-col items-center rounded bg-[#424242] text-[#1f1f1f]">
      <span className="mt-0.5 mr-0.5 self-end"><Ico s={8}><circle cx="4" cy="4" r="4" fill={S} /><path d="M2.500 2.500l3 3M5.500 2.500l-3 3" stroke="#555" /></Ico></span>
      <button className="mt-2" aria-label="导航控制盘"><Ico s={24}><path d="M12 1.500h10.500V12A10.500 10.500 0 1 1 12 1.500z" stroke={S} strokeWidth="1.500" /><circle cx="12" cy="12" r="6" stroke={S} strokeWidth="1.500" /><path d="M5 19l3-3M19 19l-3-3" stroke={S} /></Ico></button>
      <span className="mt-2"><Caret /></span>
      <span className="mt-1 h-px w-[26px] shrink-0 bg-[#585858]" />
      <button className="mt-1" aria-label="平移"><Ico s={24}><path d="M8 22C6 18 3 15 1.500 12c.5-1.500 2.500-1 4.500 1.500L4.500 5c.5-2 2.500-1.500 3 0L9 10V2.500c.5-2 3-2 3.200 0V10l1.300-7c.5-1.700 2.700-1.200 2.700.5L15.500 11l3-5.500c1-1.500 3-.5 2.500 1L18.500 14c0 3-1 5-2.500 8z" stroke={S} strokeWidth="1.500" /></Ico></button>
      <button className="mt-1" aria-label="范围缩放"><Ico s={24}><path d="M2 2l13 13M15 2L2 15M1 5V1h4M11 1h4.500v4M1 11v4.500h4" stroke={S} strokeWidth="1.500" /><circle cx="17" cy="16" r="4.500" stroke={S} strokeWidth="1.500" fill="#424242" /><path d="M20 19.500l4 4" stroke={S} strokeWidth="2.500" /></Ico></button>
      <span className="mt-1.5"><Caret /></span>
      <button className="mt-1" aria-label="动态观察"><Ico s={24}><path d="M12 1l4 5h-2v16h-4V6H8z" stroke={S} strokeWidth="1.300" /><path d="M9 10c-9 1-11 6-3 7.500M15 10c9 .5 10 6 1 7.500" stroke={S} strokeWidth="1.500" /><path d="M3 17l5-3v6z" fill={S} /></Ico></button>
      <span className="mt-1.5"><Caret /></span>
      <span className="mt-1 h-px w-[26px] shrink-0 bg-[#585858]" />
      <button className="mt-1" aria-label="ShowMotion"><Ico s={24}><path d="M1 1h6v6H1zM9 1h6v6H9zM17 1h6v6h-6zM1 10h15v13H1z" stroke={S} strokeWidth="1.500" /><path d="M6 12.500l6 4-6 4z" fill={S} /></Ico></button>
      <span className="mt-auto mr-0.5 mb-0.5 self-end"><Ico s={8}><circle cx="4" cy="4" r="4" fill={S} /><path d="M2 3h4L4 6z" fill="#555" /></Ico></span>
    </div>
  );
}

function CommandArea() {
  const line = "w-fit rounded-sm bg-[#3d3d3d] px-0.5 leading-[15px]";
  return (
    <div className="absolute inset-x-0 bottom-px mx-auto w-[60%]">
      <div className="mb-[3px] flex flex-col gap-[5px] pl-[62px] font-['Liberation_Mono','Noto_Sans_CJK_SC',monospace] text-[13px] text-[#8e8e8e]">
        <p className={line}>指定基点或 [位移(D)] &lt;位移&gt;:</p>
        <p className={line}>指定第二个点或 &lt;使用第一个点作为位移&gt;:</p>
        <p className={`${line} text-[#b0b0b0]`}>命令:</p>
      </div>
      <div className="flex h-[26px] items-center bg-[#1b1e27]">
        <span className="ml-1"><Ico s={6} h={20}><path d="M1 0v20M5 0v20" stroke="#aaa" strokeWidth="2" strokeDasharray="2 1" /></Ico></span>
        <button className="ml-1" aria-label="关闭命令行"><Ico s={10}><path d="M1 1l8 8M9 1L1 9" stroke="#aaa" strokeWidth="1.800" /></Ico></button>
        <button className="ml-2.5" aria-label="自定义"><Ico><path d="M1.500 14.500L9 7" stroke="#aaa" strokeWidth="2.500" /><path d="M8 8c-1-3 1-6 4-6l-1.500 3L13 6l2.500-1.500c0 3-3 5-6 4z" fill="#aaa" /></Ico></button>
        <div className="ml-1.5 flex h-full grow items-center rounded-sm bg-[#b3b3b3] px-1 text-[#444]">
          <Ico s={16} h={14}><path d="M.5.500h15v13H.5z" stroke="#444" /><path d="M0 0h16v3H0z" fill="#444" /><path d="M3 5.500l2.500 2L3 9.500M7 10h4" stroke="#444" /></Ico>
          <span className="ml-0.5"><Caret big /></span>
          <input aria-label="命令" placeholder="鍵入命令" className="ml-1.5 min-w-0 grow bg-transparent text-[13px] italic outline-none placeholder:text-[#555]" />
          <Caret big up />
        </div>
      </div>
    </div>
  );
}

function Canvas() {
  return (
    <main className="relative grow overflow-hidden bg-black">
      <svg className="absolute inset-0 h-full w-full" fill="none" aria-label="图形">
        <g stroke="#fff" shapeRendering="crispEdges">
          <path d="M517.500 460L537.500 224L732 360" />
          <path d="M967.500 253.500h394v194h-394z" />
          <path d="M126 31.500h46M177 31.500h46M174.500 0v29M174.500 34v46M172.500 29.500h4v5h-4z" />
        </g>
        <path d="M557.500 524.500L771.500 424.500" stroke="#183f8c" strokeWidth="5" />
        <path d="M557.500 524.500L771.500 424.500" stroke="#fff" shapeRendering="crispEdges" />
        <g fill="#0080ff" stroke="#5c5c5c"><path d="M552.500 519.500h10v10h-10zM659.500 469.500h10v10h-10zM766.500 419.500h10v10h-10z" /></g>
        <path d="M432 499L544 497" stroke="#f00" strokeWidth="2.500" />
        <path d="M558 496.500L532 491.500l3 5.500-3 6z" fill="#f00" />
      </svg>
      <svg className="absolute bottom-3.5 left-4" width="74" height="76" viewBox="0 0 74 76" stroke="#fff" fill="none" shapeRendering="crispEdges" aria-hidden="true">
        <path d="M3.500 20v49M3 69.500h51M.5 64.500h8v9h-8z" /><path d="M5 3l6.500 7L18 3M11.500 10v6M58 55l13 13M71 55L58 68" />
      </svg>
      <p className="absolute top-1.5 left-[3px] text-white">[−][俯视][二维线框]</p>
      <ViewCube />
      <NavBar />
      <CommandArea />
    </main>
  );
}

/* ---------- status bar ---------- */
function Cell({ w, on, children }: { w: string; on?: boolean; children: ReactNode }) {
  return <div className={`flex h-6 shrink-0 items-center justify-evenly ${w} ${on ? "bg-[#5b8bc0]" : "bg-[#3b4453]"}`}>{children}</div>;
}
const On = ({ children, name }: { children: ReactNode; name: string }) => (
  <button aria-label={name} aria-pressed="true" className="flex h-6 w-[22px] items-center justify-center bg-[#5b8bc0]">{children}</button>
);
const Compass = () => <path d="M8 0l2.500 8L15 13l-.5 1.500L10 13v2.500L8 14l-2 1.500V13l-4.500 1.500L1 13l4.500-5z" fill={L} />;

function StatusBar() {
  return (
    <footer className="flex h-[29px] shrink-0 border-t border-[#4a5160] text-[#e4e6e9]">
      <div className="flex items-start pl-3 text-[#b4b8bf]">
        <button className="h-[17px] w-[52px] rounded-b-[10px] bg-[#3b4453] font-bold text-white">模型</button>
        <button className="h-[17px] w-[52px] rounded-b-[10px] bg-[#2c3440] px-2">布局1</button>
        <button className="ml-0.5 h-[17px] w-[52px] rounded-b-[10px] bg-[#2c3440] px-2">布局2</button>
        <button className="ml-1 flex h-4 w-[22px] items-center justify-center rounded-b-[10px] bg-[#2c3440]" aria-label="新建布局"><Ico s={8}><path d="M4 0v8M0 4h8" stroke="#b9bdc5" strokeWidth="1.600" /></Ico></button>
      </div>
      <div className="ml-auto flex items-start gap-0.5 pt-px pr-[3px]">
        <div className="flex h-6 w-[181px] items-center justify-end bg-[#3b4453] pr-1 text-[#c3c7cd]">933.6747, 480.5672, 0.0000</div>
        <Cell w="w-[30px]"><button className="font-bold text-white">模型</button></Cell>
        <Cell w="w-16"><Ico><path d="M4.500 1v14M8.500 1v14M12.500 1v14M1 4.500h14M1 8.500h14M1 12.500h14" stroke={L} /></Ico><Ico><path d="M2 3h12M2 8h12M2 13h12" stroke={L} strokeWidth="2" strokeDasharray="2 3" /></Ico><Caret big /></Cell>
        <Cell w="w-6"><Ico><path d="M0 10h8v6H0z" fill={L} /><path d="M7.500 10V.5h7v5h-7" stroke={L} /></Ico></Cell>
        <Cell w="w-[22px]" on><Ico><path d="M3.500 1v7M0 4.500h7" stroke="#fff" strokeWidth="1.200" /><path d="M6 10h10v4H6z" fill="#fff" /><path d="M7.500 11v2" stroke="#5b8bc0" /></Ico></Cell>
        <Cell w="w-[104px]">
          <Ico><path d="M.5 0v15.500H16M.5 10.500h5v5" stroke={L} /></Ico>
          <Ico><circle cx="7" cy="9" r="6" stroke={L} strokeWidth="1.200" /><path d="M7 9h9M7 9l7-7M5 9h4" stroke={L} /></Ico><Caret big />
          <Ico><path d="M2 2l12 12" stroke="#c65a62" strokeWidth="1.300" /><path d="M8.500 1v15" stroke="#5fd38a" /></Ico><Caret big />
        </Cell>
        <Cell w="w-[22px]" on><Ico><path d="M1 14.500L13 3M0 14.500h16" stroke="#fff" strokeWidth="1.300" /><path d="M5.500 7h4v4h-4z" fill="#fff" /></Ico></Cell>
        <div className="flex w-[38px] items-center justify-between bg-[#3b4453] pr-1"><On name="对象捕捉"><Ico><path d="M3.500 5v10.500h12v-12H6M.5.5h4v4h-4z" stroke="#fff" strokeWidth="1.200" /></Ico></On><Caret big /></div>
        <Cell w="w-6"><Ico><path d="M0 2.500h16" stroke={L} /><path d="M0 6h10M10 6h6" stroke={L} strokeWidth="1.500" /><path d="M0 9.500h16" stroke={L} strokeWidth="2" /><path d="M0 13.500h12" stroke={L} strokeWidth="2.500" /></Ico></Cell>
        <Cell w="w-[22px]" on><Ico><path d="M.5.5h15v15H.5z" stroke="#fff" /><path d="M2 3.500h12M2 9.500h12" stroke="#fff" strokeWidth="3" strokeDasharray="3 3" /><path d="M5 6.500h9M5 12.500h9" stroke="#fff" strokeWidth="3" strokeDasharray="3 3" /></Ico></Cell>
        <Cell w="w-6"><Ico><path d="M2.500 0v5M0 2.500h5" stroke={L} /><path d="M6 7h10v9H6z" fill={G} /><path d="M4.500 10V5.500H11" stroke={L} /></Ico></Cell>
        <Cell w="w-10"><Ico><path d="M4.500 4.500h7v8h-7zM4.500 4.500L8 1h7.500v8l-4 3.500M11.500 4.500L15.500 1" stroke={L} /><path d="M.5 11.500h4v4h-4z" stroke="#f2975f" strokeWidth="1.200" fill={D} /></Ico><Caret big /></Cell>
        <Cell w="w-[22px]" on><Ico><path d="M3 2v11.500h11M1 4l2-3 2 3M12 11.500l3 2-3 2" stroke="#fff" strokeWidth="1.300" /><path d="M10 2L7 7h2.500L8 11l5-5h-2.500l2-4z" fill="#fff" /></Ico></Cell>
        <Cell w="w-10"><Ico><path d="M2 5h9v9H2zM3 4l3-3h9v8l-3 4" stroke={L} strokeDasharray="3 1" /><Dot x={2} y={5} r={1.8} /><Dot x={11.500} y={5} r={1.8} /><Dot x={2} y={14} r={1.8} /><Dot x={11.500} y={14} r={1.8} /></Ico><Caret big /></Cell>
        <div className="flex w-10 items-center justify-between bg-[#3b4453] pr-1"><On name="小控件"><Ico><path d="M8 1L1.500 5v7L8 15.500 14.500 12V5zM8 2v7M8 9l-6 3.500M8 9l6 3.500" stroke="#fff" strokeWidth="1.200" /><circle cx="8" cy="2" r="1.700" fill="#fff" /><circle cx="2" cy="12.500" r="1.700" fill="#fff" /><circle cx="14" cy="12.500" r="1.700" fill="#fff" /></Ico></On><Caret big /></div>
        <div className="flex h-6 w-[149px] items-center justify-between bg-[#3b4453] pr-1">
          <On name="注释可见性"><Ico><Compass /><circle cx="13" cy="3" r="2.300" stroke="#fff" fill="#5b8bc0" /></Ico></On>
          <Ico><Compass /><path d="M13 0l-3 4h2l-1.500 3.500L15 3.500h-2L15 0z" fill={L} /></Ico>
          <Ico><Compass /></Ico>
          <span className="text-[13px]">1:1 / 100%</span><Caret big />
        </div>
        <Cell w="w-[38px]"><Ico><circle cx="8" cy="8" r="4" stroke={L} strokeWidth="3.500" /><path d="M8 0v3M8 13v3M0 8h3M13 8h3M2.300 2.300l2 2M11.700 11.700l2 2M13.700 2.300l-2 2M4.300 11.700l-2 2" stroke={L} strokeWidth="2.500" /></Ico><Caret big /></Cell>
        <Cell w="w-6"><Ico><path d="M8 0v16M0 8h16" stroke={L} strokeWidth="1.500" /></Ico></Cell>
        <div className="flex h-[27px] w-[68px] justify-center bg-black pt-0.5"><span className="flex w-[60px] items-center justify-center gap-1 rounded-t-md bg-white text-[13px] text-[#333]">CH<Ico s={11} h={13}><path d="M3 1c4 1 7 4 7 7 0 3-4 4-8 3M3 1c3 4 3 7-1 10" stroke="#333" strokeWidth="1.200" /></Ico>简</span></div>
        <Cell w="w-[28px]"><span className="ml-2"><Caret big /></span></Cell>
        <Cell w="w-6"><Ico><path d="M2 .5h12v15H2z" stroke={L} strokeWidth="1.300" /><path d="M2 2h12" stroke={L} strokeWidth="2" /><path d="M4 6h2M7.500 6H12M4 9h2M7.500 9H12M4 12h2M7.500 12H12" stroke={L} strokeWidth="1.500" /></Ico></Cell>
        <Cell w="w-10"><Ico><path d="M.5 1.500h13v9H.5zM.5 3h13" stroke={L} /><path d="M8 10h8v6H8z" fill={L} /><path d="M10 10V8a2 2 0 0 1 4 0v2" stroke={L} strokeWidth="1.300" /></Ico><Caret big /></Cell>
        <Cell w="w-6"><Ico><path d="M.5.5h6v6h-6zM5 15.500L8 9l3 6.500z" stroke={L} strokeWidth="1.200" /><circle cx="12.500" cy="5" r="3" stroke={L} strokeWidth="1.200" /></Ico></Cell>
        <Cell w="w-[22px]" on><Ico><circle cx="8" cy="8" r="7" fill={L} stroke="#fff" /><path d="M4 11l4-5 4-2-3 6z" fill="#5b8bc0" /></Ico></Cell>
        <Cell w="w-[50px]"><Ico><path d="M.5 2.500h15v11H.5z" stroke={L} /><path d="M9 8l4-3.500M10 4.500h3.200v3M3 11.500l4-3.500M3 8.500v3h3" stroke={L} /></Ico><Ico><path d="M0 2.500h16M0 8h16M0 13.500h16" stroke="#fff" strokeWidth="2" /></Ico></Cell>
      </div>
    </footer>
  );
}

function Tooltip() {
  return (
    <div role="tooltip" className="absolute top-[125px] left-[270px] h-28 w-[200px] rounded-sm border border-[#c4c4c4] bg-gradient-to-b from-[#f1f1f1] to-[#e6e6e6] px-[7px] pt-2 text-[#454545] shadow-md">
      <p className="leading-4 font-bold">移动</p>
      <p className="mt-[7px] leading-4 whitespace-nowrap">将对象在指定方向上移动指定距离</p>
      <hr className="mt-2 -ml-1 border-[#b5b5b5]" />
      <p className="mt-[5px] flex items-center gap-1 text-[13px] leading-4 font-bold"><Ico><path d="M0 1h15v12H0z" fill="#f4f191" /><path d="M0 0h15v1.500H0z" fill="#1c3fb8" /><path d="M3 9.500h13V16H3z" fill="#111" /><path d="M0 13h3" stroke="#1c3fb8" /><path d="M5 14h3" stroke="#fff" strokeDasharray="1 1" /></Ico>MOVE</p>
      <p className="mt-2 leading-4 font-bold">按 F1 键获得更多帮助</p>
    </div>
  );
}

function Watermark() {
  return (
    <div className="pointer-events-none absolute right-2.5 bottom-1.5 flex items-end">
      <svg width="52" height="44" viewBox="0 0 54 44" className="-mr-2" aria-hidden="true">
        <path d="M46 1C24 1 4 12 2 34c2-3 4-5 6-8C13 14 28 6 46 1z" fill="#0b5c95" />
        <path d="M42 4C26 8 12 17 10 30l-4 1C6 18 22 8 42 4z" fill="#083a63" />
        <path d="M6 30c2-10 14-16 24-14-7 1-12 4-14 8-2 4 3 6 8 4-5 6-16 8-18 2z" fill="#1d62b0" />
        <path d="M26 15c12-1 16 9 6 18-7 6-17 8-26 7 10-1 18-5 22-11 4-6 3-11-2-14z" fill="#2f8f3a" />
        <path d="M4 40c8 0 15-2 20-6-2 5-12 8-20 6z" fill="#b5b02c" />
      </svg>
      <div className="flex flex-col">
        <span className="text-[21px] leading-6 font-bold text-[#14507f]">极光下载站</span>
        <span className="text-[16px] leading-5 font-bold text-[#2f8f4a] opacity-80">www.xz7.com</span>
      </div>
    </div>
  );
}

export default function App() {
  return (
    <div className="relative h-screen w-full overflow-hidden bg-[#f2f2f2] px-[2px] font-['Noto_Sans','Noto_Sans_CJK_SC',sans-serif] text-[12px] leading-4">
      <div className="flex h-full flex-col border-x border-t border-[#0c8fd8] bg-[#222933]">
        <TitleBar />
        <MenuBar />
        <Ribbon />
        <FileTabs />
        <div className="flex min-h-0 grow px-[3px]">
          <SideToolbar />
          <Canvas />
        </div>
        <StatusBar />
      </div>
      <Tooltip />
      <Watermark />
      <svg className="pointer-events-none absolute top-0 left-0 drop-shadow-[2px_3px_2px_rgba(0,0,0,0.5)]" width="300" height="320" aria-hidden="true">
        <path d="M27 92L89 299M217 124L162 268" stroke="#f00" strokeWidth="2.500" />
        <path d="M20 71L33 93l-6-2-7 5zM224 102L223 129l-6-5-8 2z" fill="#f00" />
        <path d="M266 99v15.500l3.500-3.200 2.500 6 2.600-1.100-2.500-5.800h4.800z" fill="#fff" stroke="#222" strokeWidth=".8" />
      </svg>
    </div>
  );
}
